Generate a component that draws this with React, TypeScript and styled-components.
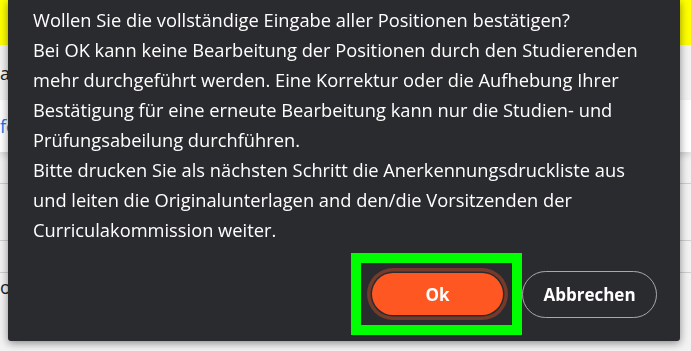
import styled, { createGlobalStyle } from "styled-components";

const GlobalStyle = createGlobalStyle`
  html, body {
    margin: 0;
    padding: 0;
    background: #f3f3f3;
    font-family: "Open Sans", "Noto Sans", Arial, sans-serif;
    overflow: hidden;
  }
`;

const Page = styled.div`
  width: 691px;
  height: 351px;
  display: flex;
  flex-direction: column;
  background: #f3f3f3;
`;

const TopBar = styled.div`
  height: 45px;
  background: #ffff00;
`;

const Section = styled.div<{ $h: number; $white?: boolean; $line?: boolean }>`
  height: ${(p) => p.$h}px;
  display: flex;
  align-items: center;
  font-size: 18px;
  color: #222;
  background: ${(p) => (p.$white ? "#ffffff" : "transparent")};
  border-bottom: ${(p) => (p.$line ? "1px solid #cfcfcf" : "none")};
  box-shadow: ${(p) => (p.$white ? "0 4px 6px rgba(0,0,0,0.12)" : "none")};
  position: relative;
`;

const Fragment = styled.span<{ $link?: boolean }>`
  color: ${(p) => (p.$link ? "#1a73e8" : "#222")};
`;

const Dialog = styled.div`
  position: fixed;
  top: 0;
  left: 8px;
  width: 672px;
  height: 341px;
  box-sizing: border-box;
  padding: 5px 23px 4px 25px;
  background: #2a2b2f;
  color: #ffffff;
  box-shadow: 0 2px 8px rgba(0, 0, 0, 0.45);
  border-radius: 0 0 3px 3px;
  display: flex;
  flex-direction: column;
`;

const Message = styled.p`
  margin: 0;
  font-size: 18.3px;
  line-height: 30px;
  white-space: nowrap;
`;

const Footer = styled.div`
  margin-top: 8px;
  display: flex;
  justify-content: flex-end;
  align-items: center;
`;

const Highlight = styled.div`
  border: 10px solid #00ff00;
  padding: 10px 9px 10px 11px;
  display: flex;
`;

const PillButton = styled.button<{ $primary?: boolean }>`
  box-sizing: border-box;
  font-family: "Open Sans", "Noto Sans", Arial, sans-serif;
  font-weight: 700;
  font-size: 17px;
  color: #ffffff;
  border-radius: 999px;
  cursor: pointer;
  display: flex;
  align-items: center;
  justify-content: center;
  width: ${(p) => (p.$primary ? 131 : 135)}px;
  height: ${(p) => (p.$primary ? 42 : 47)}px;
  background: ${(p) => (p.$primary ? "#ff5722" : "transparent")};
  border: ${(p) => (p.$primary ? "none" : "1px solid #a9a9ad")};
  box-shadow: ${(p) =>
    p.$primary ? "0 0 0 1.5px #2a2b2f, 0 0 0 5px #743a2a" : "none"};
`;

export default function App() {
  return (
    <>
      <GlobalStyle />
      <Page>
        <TopBar />
        <Section $h={55}>
          <Fragment>a</Fragment>
        </Section>
        <Section $h={52} $white>
          <Fragment $link>fe</Fragment>
        </Section>
        <Section $h={31} $line />
        <Section $h={56} $line />
        <Section $h={31} $line />
        <Section $h={28}>
          <Fragment>o</Fragment>
        </Section>
      </Page>
      <Dialog role="dialog">
        <Message>
          Wollen Sie die vollständige Eingabe aller Positionen bestätigen?
          <br />
          Bei OK kann keine Bearbeitung der Positionen durch den Studierenden
          <br />
          mehr durchgeführt werden. Eine Korrektur oder die Aufhebung Ihrer
          <br />
          Bestätigung für eine erneute Bearbeitung kann nur die Studien- und
          <br />
          Prüfungsabeilung durchführen.
          <br />
          Bitte drucken Sie als nächsten Schritt die Anerkennungsdruckliste aus
          <br />
          und leiten die Originalunterlagen and den/die Vorsitzenden der
          <br />
          Curriculakommission weiter.
        </Message>
        <Footer>
          <Highlight>
            <PillButton $primary>Ok</PillButton>
          </Highlight>
          <PillButton>Abbrechen</PillButton>
        </Footer>
      </Dialog>
    </>
  );
}
